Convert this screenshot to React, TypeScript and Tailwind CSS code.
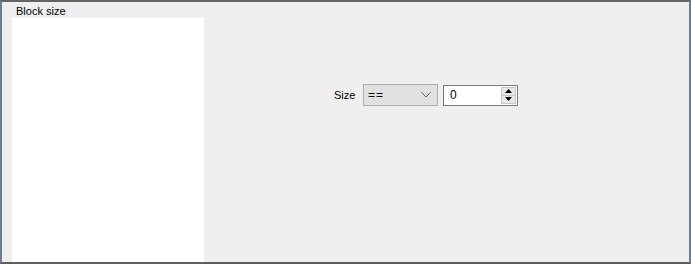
const font = { fontFamily: '"Liberation Sans", Arial, sans-serif' };

function ComboBox() {
  return (
    <div className="flex h-[22px] w-[75px] items-center justify-between border border-[#adadad] bg-[#e1e1e1] pl-[4px] pr-[6px]">
      <span className="text-[12px] leading-none tracking-[1px] text-black">==</span>
      <svg width="10" height="6" viewBox="0 0 10 6" className="text-[#606060]">
        <path d="M0.5 0.5 L5 5 L9.5 0.5" fill="none" stroke="currentColor" strokeWidth="1" />
      </svg>
    </div>
  );
}

function SpinBox() {
  return (
    <div className="flex h-[21px] w-[75px] border border-[#7a7a7a] bg-white">
      <div className="flex flex-1 items-center pl-[6px] text-[12px] text-black">0</div>
      <div className="my-[1px] mr-[1px] flex w-[15px] flex-col border border-[#c8c8c8] bg-[#e8e8e8]">
        <div className="flex flex-1 items-center justify-center border-b border-[#c8c8c8]">
          <svg width="7" height="4" viewBox="0 0 7 4">
            <path d="M3.5 0 L7 4 L0 4 Z" fill="#000" />
          </svg>
        </div>
        <div className="flex flex-1 items-center justify-center">
          <svg width="7" height="4" viewBox="0 0 7 4">
            <path d="M0 0 L7 0 L3.5 4 Z" fill="#000" />
          </svg>
        </div>
      </div>
    </div>
  );
}

export default function App() {
  return (
    <div
      className="flex h-[264px] w-[691px] flex-col border-y-2 border-x-2 border-t-[#646464] border-b-[#5e5e5e] border-l-[#6f7d90] border-r-[#6f7d90] bg-[#efefef]"
      style={font}
    >
      <div className="h-[16px] pl-[14px] pt-[2px] text-[11px] leading-[14px] text-black">Block size</div>
      <div className="flex flex-1">
        <div className="ml-[10px] w-[192px] bg-white" />
        <div className="flex-1 pl-[130px] pt-[66px]">
          <div className="flex items-center">
            <span className="w-[29px] text-[11px] text-black">Size</span>
            <ComboBox />
            <div className="ml-[5px]">
              <SpinBox />
            </div>
          </div>
        </div>
      </div>
    </div>
  );
}
